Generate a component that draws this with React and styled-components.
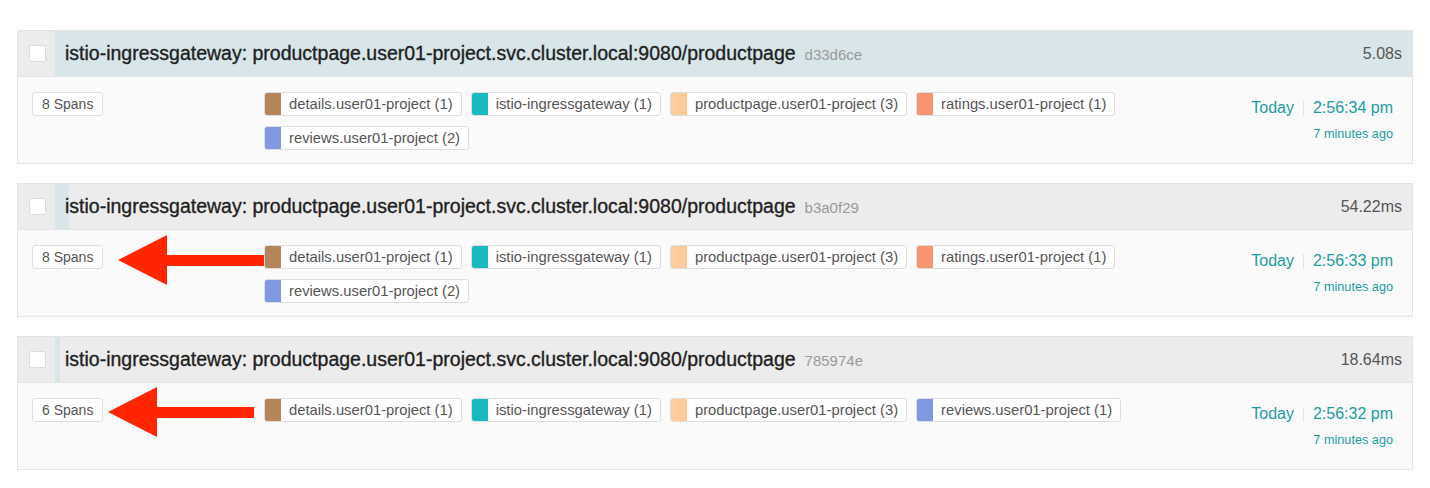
import React from 'react';
import styled, { createGlobalStyle } from 'styled-components';

const GlobalStyle = createGlobalStyle`
  * { box-sizing: border-box; }
  body {
    margin: 0;
    background: #ffffff;
    font-family: 'Liberation Sans', Arial, Helvetica, sans-serif;
  }
`;

const COLORS = {
  details: '#b5845b',
  istio: '#17b8be',
  productpage: '#ffcb99',
  ratings: '#f89570',
  reviews: '#7f98e0',
};

const traces = [
  {
    id: 'd33d6ce',
    duration: '5.08s',
    ms: 5080,
    spans: 8,
    time: '2:56:34 pm',
    services: [
      ['details', 'details.user01-project (1)'],
      ['istio', 'istio-ingressgateway (1)'],
      ['productpage', 'productpage.user01-project (3)'],
      ['ratings', 'ratings.user01-project (1)'],
      ['reviews', 'reviews.user01-project (2)'],
    ],
  },
  {
    id: 'b3a0f29',
    duration: '54.22ms',
    ms: 54.22,
    spans: 8,
    time: '2:56:33 pm',
    arrow: { left: 100, top: 5 },
    services: [
      ['details', 'details.user01-project (1)'],
      ['istio', 'istio-ingressgateway (1)'],
      ['productpage', 'productpage.user01-project (3)'],
      ['ratings', 'ratings.user01-project (1)'],
      ['reviews', 'reviews.user01-project (2)'],
    ],
  },
  {
    id: '785974e',
    duration: '18.64ms',
    ms: 18.64,
    spans: 6,
    time: '2:56:32 pm',
    arrow: { left: 90, top: 4 },
    services: [
      ['details', 'details.user01-project (1)'],
      ['istio', 'istio-ingressgateway (1)'],
      ['productpage', 'productpage.user01-project (3)'],
      ['reviews', 'reviews.user01-project (1)'],
    ],
  },
];

const MAX_MS = 5080;

const RedArrow = ({ left, top }) => (
  <ArrowWrap left={left} top={top}>
    <svg width="146" height="50" viewBox="0 0 146 50">
      <polygon points="0,25 49,0 49,20 146,20 146,31 49,31 49,50" fill="#ff2600" />
    </svg>
  </ArrowWrap>
);

export default function App() {
  return (
    <>
      <GlobalStyle />
      <Page>
        {traces.map((t) => (
          <Card key={t.id}>
            <Header>
              <CheckCell>
                <CheckBox />
              </CheckCell>
              <TitleArea>
                <DurationBar style={{ width: `${(t.ms / MAX_MS) * 100}%` }} />
                <Title>
                  istio-ingressgateway: productpage.user01-project.svc.cluster.local:9080/productpage
                  <TraceId>{t.id}</TraceId>
                </Title>
                <Duration>{t.duration}</Duration>
              </TitleArea>
            </Header>
            <Body>
              <SpanCol>
                <SpanCount>{t.spans} Spans</SpanCount>
              </SpanCol>
              <Services>
                {t.services.map(([key, label]) => (
                  <Tag key={label}>
                    <Swatch color={COLORS[key]} />
                    <TagLabel>{label}</TagLabel>
                  </Tag>
                ))}
              </Services>
              <TimeBlock>
                <Today>Today</Today>
                <Sep />
                <Clock>{t.time}</Clock>
                <Ago>7 minutes ago</Ago>
              </TimeBlock>
              {t.arrow && <RedArrow left={t.arrow.left} top={t.arrow.top} />}
            </Body>
          </Card>
        ))}
      </Page>
    </>
  );
}

const Page = styled.div`
  padding: 30px 17px 0 17px;
  display: flex;
  flex-direction: column;
  gap: 19px;
`;

const Card = styled.div`
  border: 1px solid #e3e3e3;
  background: #fafafa;
`;

const Header = styled.div`
  display: flex;
  height: 46px;
  border-bottom: 1px solid #e3e3e3;
  background: #ececec;
`;

const CheckCell = styled.div`
  width: 37px;
  display: flex;
  align-items: center;
  justify-content: center;
  background: #ececec;
`;

const CheckBox = styled.div`
  width: 17px;
  height: 17px;
  background: #ffffff;
  border: 1px solid #dcdcdc;
  border-radius: 2px;
  margin-left: 1px;
`;

const TitleArea = styled.div`
  position: relative;
  flex: 1;
  display: flex;
  align-items: center;
  justify-content: space-between;
  padding: 0 10px 0 10px;
`;

const DurationBar = styled.div`
  position: absolute;
  left: 0;
  top: 0;
  bottom: 0;
  background: #d8e6ea;
`;

const Title = styled.div`
  position: relative;
  font-size: 19.5px;
  color: #1f1f1f;
  font-weight: 400;
  -webkit-text-stroke: 0.35px #1f1f1f;
  white-space: nowrap;
`;

const TraceId = styled.span`
  font-size: 15px;
  color: #9a9a9a;
  margin-left: 9px;
  -webkit-text-stroke: 0;
`;

const Duration = styled.div`
  position: relative;
  font-size: 16px;
  color: #555555;
`;

const Body = styled.div`
  position: relative;
  display: flex;
  align-items: flex-start;
  min-height: 86px;
  padding: 15px 19px 13px 14px;
`;

const SpanCol = styled.div`
  width: 232px;
  flex-shrink: 0;
`;

const SpanCount = styled.span`
  display: inline-flex;
  align-items: center;
  height: 24px;
  padding: 0 9px;
  font-size: 14px;
  color: #555555;
  background: #ffffff;
  border: 1px solid #dedede;
  border-radius: 3px;
`;

const Services = styled.div`
  flex: 1;
  display: flex;
  flex-wrap: wrap;
  gap: 10px 9px;
`;

const Tag = styled.div`
  display: flex;
  align-items: stretch;
  height: 24px;
  background: #ffffff;
  border: 1px solid #dedede;
  border-radius: 3px;
  overflow: hidden;
`;

const Swatch = styled.div`
  width: 16px;
  background: ${(p) => p.color};
`;

const TagLabel = styled.span`
  display: flex;
  align-items: center;
  padding: 0 8px 0 8px;
  font-size: 14.8px;
  color: #555555;
  white-space: nowrap;
`;

const TimeBlock = styled.div`
  display: grid;
  grid-template-columns: auto auto auto;
  align-items: center;
  column-gap: 9px;
  row-gap: 10px;
  margin-top: 7px;
  color: #1c9ca1;
  text-align: right;
`;

const Today = styled.span`
  font-size: 16px;
`;

const Sep = styled.span`
  width: 1px;
  height: 15px;
  background: #e3e3e3;
`;

const Clock = styled.span`
  font-size: 16px;
`;

const Ago = styled.span`
  grid-column: 3;
  font-size: 12.7px;
`;

const ArrowWrap = styled.div`
  position: absolute;
  left: ${(p) => p.left}px;
  top: ${(p) => p.top}px;
  line-height: 0;
`;
